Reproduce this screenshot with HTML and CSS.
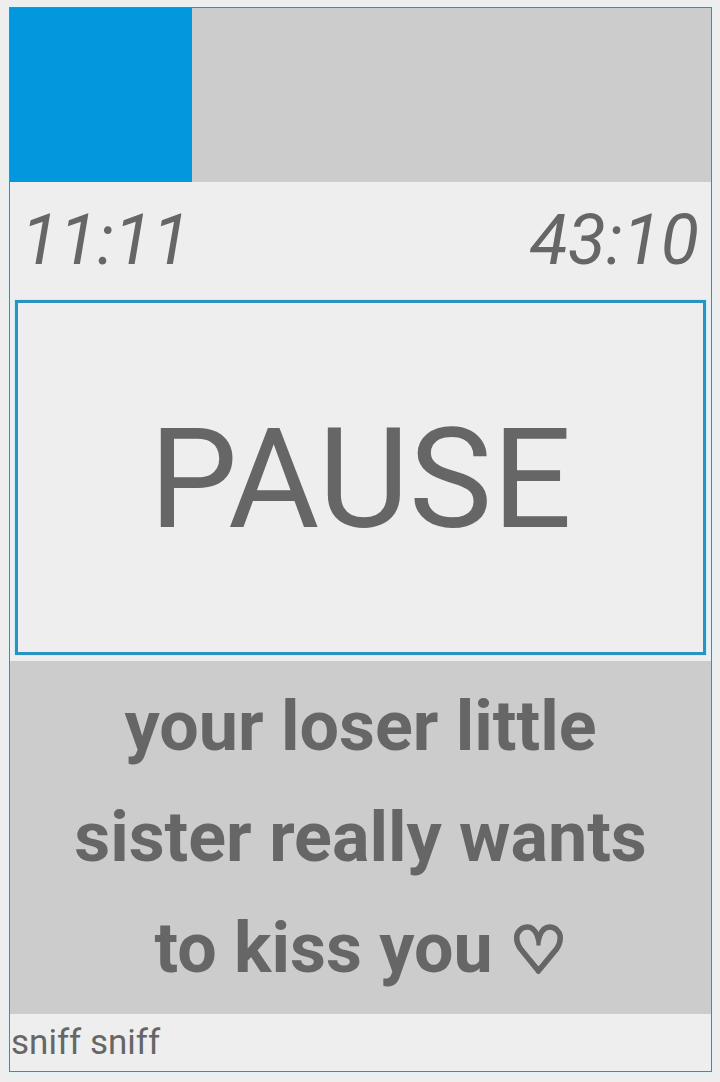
FILE: index.html
```html
<!DOCTYPE html>
<html>
<head>
<meta charset="utf-8">
<link rel="stylesheet" href="styles.css">
</head>
<body>
<div class="frame">
  <div class="progress"><div class="progress-fill" style="width:25.9%"></div></div>
  <div class="times">
    <span class="time">11:11</span>
    <span class="time">43:10</span>
  </div>
  <div class="pause-wrap">
    <div class="pause">PAUSE</div>
  </div>
  <div class="message">your loser little<br>sister really wants<br>to kiss you <span class="heart">♡</span></div>
  <div class="footer">sniff sniff</div>
</div>
</body>
</html>
```
FILE: styles.css
```css
html, body {
  margin: 0;
  padding: 0;
  background: #eeeeee;
}
body {
  padding: 7px 8px 9px 9px;
  font-family: Roboto, "Liberation Sans", sans-serif;
  color: #666666;
}
.frame {
  border: 1px solid #3a8fb0;
  box-shadow: 0 0 0 1px #dff3f8;
  background: #eeeeee;
  display: flex;
  flex-direction: column;
  height: 1063px;
}
.progress {
  height: 174px;
  background: #cccccc;
  display: flex;
}
.progress-fill {
  background: #0398dd;
  height: 100%;
}
.times {
  height: 118px;
  display: flex;
  justify-content: space-between;
  align-items: flex-start;
  padding: 0 12px 0 11px;
}
.time {
  font-style: italic;
  font-size: 70px;
  line-height: 1;
  margin-top: 23px;
}
.pause-wrap {
  padding: 0 5px 6px 5px;
}
.pause {
  border: 3px solid #2a93c2;
  box-shadow: 0 0 0 1px #c8f0fa;
  display: flex;
  align-items: center;
  justify-content: center;
  font-size: 140px;
  line-height: 1;
  padding-top: 2px;
  box-sizing: border-box;
  height: 355px;
}
.message {
  background: #cccccc;
  height: 353px;
  box-sizing: border-box;
  padding-top: 10px;
  text-align: center;
  font-weight: bold;
  font-size: 70px;
  line-height: 111px;
}
.heart {
  font-family: "DejaVu Sans", sans-serif;
  font-weight: normal;
  font-size: 63px;
  -webkit-text-stroke: 4px #666666;
}
.footer {
  font-size: 35px;
  line-height: 1;
  padding: 11px 0 0 1px;
}
```
